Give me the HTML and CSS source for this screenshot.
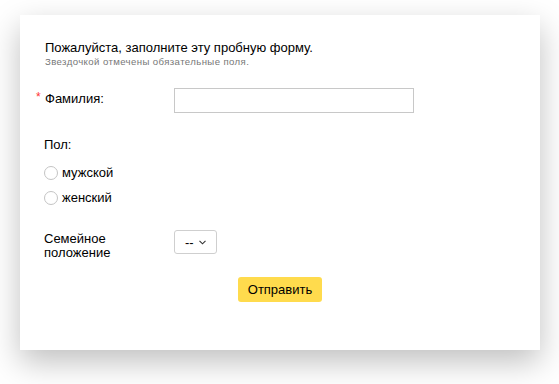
FILE: index.html
```html
<!DOCTYPE html>
<html lang="ru">
<head>
<meta charset="utf-8">
<title>Форма</title>
<link rel="stylesheet" href="styles.css">
</head>
<body>
<form class="card">
  <p class="title">Пожалуйста, заполните эту пробную форму.</p>
  <p class="hint">Звездочкой отмечены обязательные поля.</p>

  <div class="row row-name">
    <label class="label"><span class="req">*</span>Фамилия:</label>
    <span class="input"></span>
  </div>

  <div class="group">
    <div class="group-title">Пол:</div>
    <div class="radio"><span class="circle"></span><span>мужской</span></div>
    <div class="radio"><span class="circle"></span><span>женский</span></div>
  </div>

  <div class="row row-status">
    <label class="label label-wrap">Семейное положение</label>
    <span class="select"><span>--</span><svg class="chev" width="7" height="5" viewBox="0 0 7 5"><polyline points="0.5,0.8 3.5,3.8 6.5,0.8" fill="none" stroke="#333" stroke-width="1.1"/></svg></span>
  </div>

  <div class="actions">
    <span class="button">Отправить</span>
  </div>
</form>
</body>
</html>
```

FILE: styles.css
```css
html, body {
  margin: 0;
  background: #fff;
}
body {
  min-height: 384px;
  box-sizing: border-box;
  padding: 15px 20px 34px 20px;
  font-family: "Liberation Sans", Arial, sans-serif;
  color: #000;
}
.card {
  width: 520px;
  height: 335px;
  box-sizing: border-box;
  background: #fff;
  box-shadow: 0 12px 30px rgba(0, 0, 0, 0.25);
  padding: 25px 25px 0 25px;
}
.title {
  margin: 0;
  font-size: 13px;
  line-height: 15px;
}
.hint {
  margin: 1px 0 0 0;
  font-size: 9.6px;
  line-height: 11px;
  letter-spacing: 0.4px;
  color: #777;
}
.row {
  display: flex;
  align-items: flex-start;
}
.row-name {
  margin-top: 21px;
}
.label {
  width: 129px;
  flex: none;
  font-size: 13px;
  line-height: 15px;
  padding-top: 3px;
  box-sizing: border-box;
}
.req {
  display: inline-block;
  width: 8px;
  margin-left: -9px;
  margin-right: 1px;
  color: #f33;
  font-size: 12px;
  vertical-align: top;
  line-height: 12px;
}
.input {
  width: 240px;
  height: 25px;
  box-sizing: border-box;
  border: 1px solid #c8c8c8;
  background: #fff;
}
.group {
  margin-top: 24px;
}
.group-title {
  font-size: 13px;
  line-height: 15px;
  margin-left: -1px;
  margin-bottom: 8px;
}
.radio {
  display: flex;
  align-items: center;
  height: 25px;
  font-size: 13px;
  line-height: 15px;
  margin-left: -1px;
}
.circle {
  width: 14px;
  height: 14px;
  box-sizing: border-box;
  border: 1px solid #c4c4c4;
  border-radius: 50%;
  background: #fff;
  margin-right: 4px;
  flex: none;
}
.row-status {
  margin-top: 20px;
}
.label-wrap {
  padding-top: 2px;
  line-height: 14px;
  padding-right: 30px;
  margin-left: -1px;
}
.select {
  display: inline-flex;
  align-items: center;
  gap: 5px;
  height: 24px;
  box-sizing: border-box;
  padding: 0 10px;
  border: 1px solid #cfcfcf;
  border-radius: 3px;
  font-size: 13px;
  margin-left: 1px;
}
.chev {
  display: block;
  margin-top: 1px;
}
.actions {
  display: flex;
  justify-content: center;
  margin-top: 17px;
}
.button {
  display: inline-flex;
  align-items: center;
  justify-content: center;
  width: 84px;
  height: 25px;
  border-radius: 3px;
  background: #ffdb4d;
  font-size: 13px;
}
```
